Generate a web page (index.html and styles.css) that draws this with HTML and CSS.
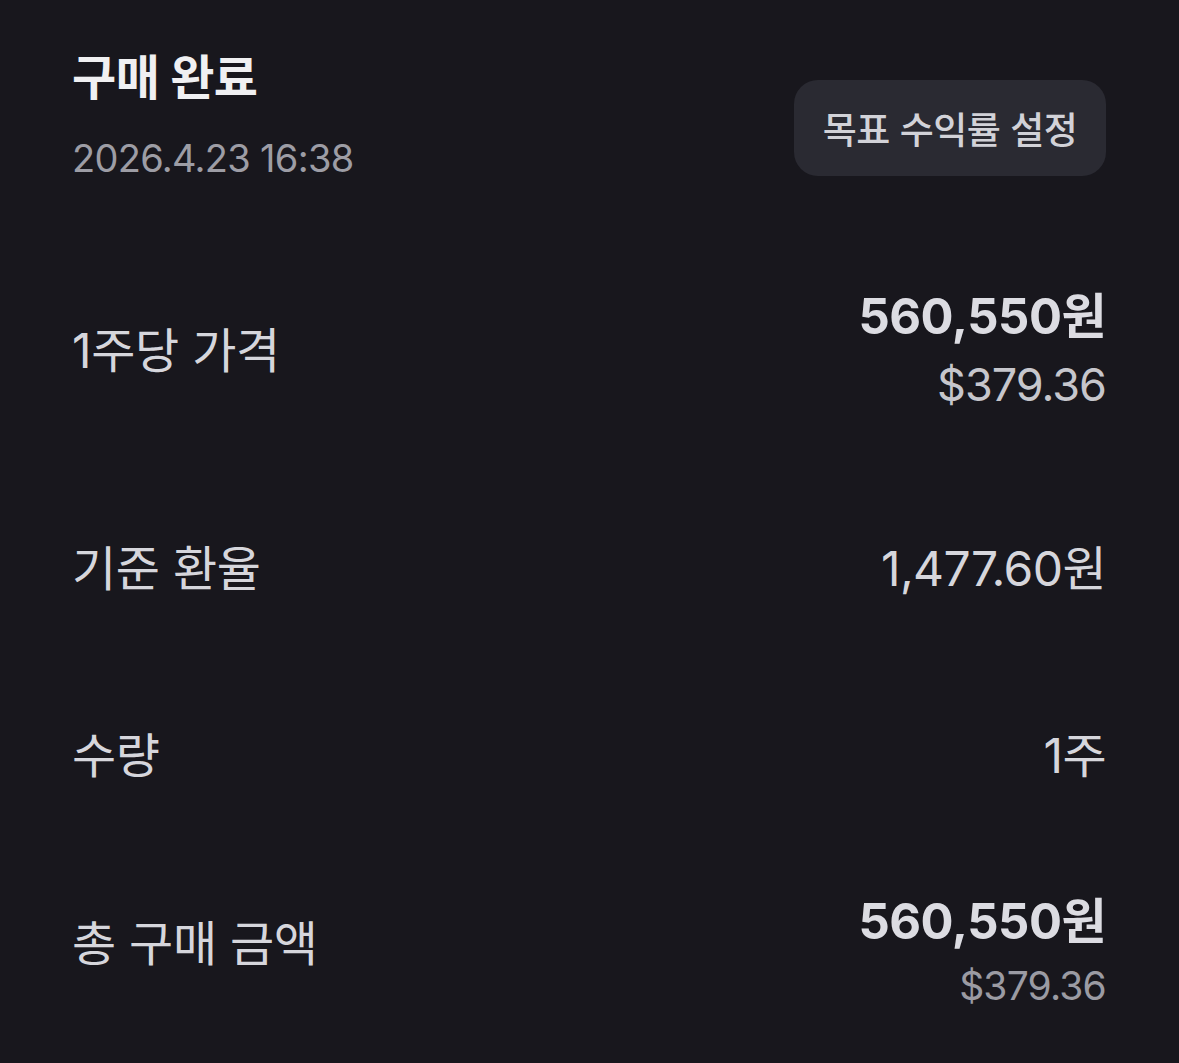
FILE: index.html
```html
<!DOCTYPE html>
<html lang="ko">
<head>
<meta charset="utf-8">
<link rel="stylesheet" href="styles.css">
</head>
<body>
<main class="page">
  <header class="head">
    <div class="head-text">
      <h1 class="title">구매 완료</h1>
      <div class="date">2026.4.23 16:38</div>
    </div>
    <button class="goal-btn">목표 수익률 설정</button>
  </header>

  <section class="row row-price">
    <div class="label">1주당 가격</div>
    <div class="value">
      <div class="main bold">560,550원</div>
      <div class="sub">$379.36</div>
    </div>
  </section>

  <section class="row row-rate">
    <div class="label">기준 환율</div>
    <div class="value">
      <div class="main">1,477.60원</div>
    </div>
  </section>

  <section class="row row-qty">
    <div class="label">수량</div>
    <div class="value">
      <div class="main">1주</div>
    </div>
  </section>

  <section class="row row-total">
    <div class="label">총 구매 금액</div>
    <div class="value">
      <div class="main bold">560,550원</div>
      <div class="sub sub-dim">$379.36</div>
    </div>
  </section>
</main>
</body>
</html>
```

FILE: styles.css
```css
html, body {
  margin: 0;
  padding: 0;
  background: #18171d;
}
body {
  font-family: "Inter", "Noto Sans CJK KR", sans-serif;
  color: #d8d8de;
}
.page {
  width: 1179px;
  height: 1063px;
  box-sizing: border-box;
  padding: 40px 73px 0 72px;
  overflow: hidden;
}
.head {
  display: flex;
  justify-content: space-between;
  align-items: flex-start;
}
.title {
  margin: 0;
  font-size: 48px;
  font-weight: 700;
  line-height: 76px;
  color: #f0f0f2;
  letter-spacing: -0.5px;
}
.date {
  margin-top: 17px;
  font-size: 38px;
  line-height: 50px;
  color: #9d9da5;
  letter-spacing: -0.7px;
}
.goal-btn {
  margin-top: 40px;
  width: 312px;
  height: 96px;
  border: none;
  border-radius: 24px;
  background: #2a2a32;
  color: #d2d2d8;
  font-family: "Noto Sans CJK KR", sans-serif;
  font-size: 37px;
  font-weight: 500;
  letter-spacing: -0.5px;
  padding: 0;
}
.row {
  display: flex;
  justify-content: space-between;
  align-items: center;
}
.label {
  font-size: 48px;
  line-height: 60px;
  color: #d6d6dc;
  letter-spacing: -0.3px;
}
.value {
  text-align: right;
}
.main {
  font-size: 48px;
  line-height: 68px;
  color: #d6d6dc;
  letter-spacing: -0.6px;
}
.main.bold {
  font-size: 49px;
  font-weight: 700;
  color: #dcdce2;
  letter-spacing: -0.5px;
}
.sub {
  font-size: 45px;
  line-height: 68px;
  color: #c6c6cc;
  letter-spacing: -1px;
}
.sub-dim {
  font-size: 39px;
  line-height: 64px;
  color: #9b9ba3;
  letter-spacing: -0.8px;
}
.row-total .main.bold {
  line-height: 64px;
}
.row-total .value {
  padding-top: 20px;
}
.row-price {
  margin-top: 100px;
  height: 136px;
}
.row-rate {
  margin-top: 120px;
  height: 60px;
}
.row-qty {
  margin-top: 127px;
  height: 60px;
}
.row-total {
  margin-top: 84px;
  height: 148px;
}
```
